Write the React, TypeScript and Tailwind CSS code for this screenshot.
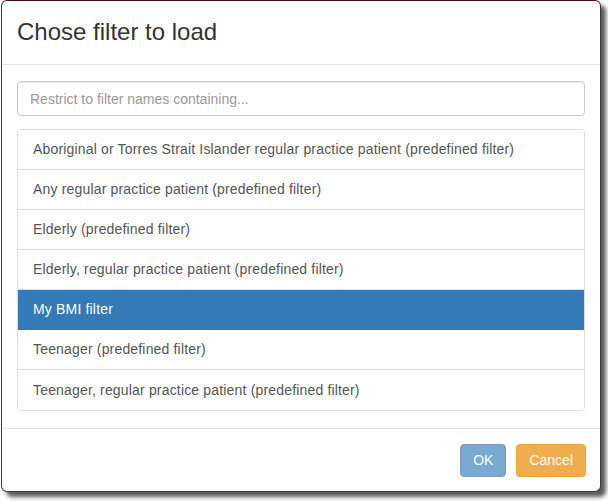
import React from 'react';

const filters = [
  'Aboriginal or Torres Strait Islander regular practice patient (predefined filter)',
  'Any regular practice patient (predefined filter)',
  'Elderly (predefined filter)',
  'Elderly, regular practice patient (predefined filter)',
  'My BMI filter',
  'Teenager (predefined filter)',
  'Teenager, regular practice patient (predefined filter)',
];

export default function App() {
  const selected = 'My BMI filter';

  return (
    <div className="w-[608px] h-[501px] bg-white pl-[1px] font-['Liberation_Sans',Arial,sans-serif]">
      <div className="w-[600px] h-[492px] flex flex-col bg-white rounded-[6px] border border-[#3a3a3a] border-t-[#4a1020] shadow-[5px_5px_4px_rgba(0,0,0,0.65)]">
        {/* header */}
        <div className="h-[64px] shrink-0 flex items-center px-[15px] border-b border-[#e5e5e5]">
          <h4 className="text-[24px] leading-none text-[#333] pb-[1px]">Chose filter to load</h4>
        </div>

        {/* body */}
        <div className="flex-1 px-[15px] pt-[16px]">
          <input
            type="text"
            placeholder="Restrict to filter names containing..."
            className="w-full h-[35px] px-[12px] text-[14px] text-[#555] placeholder:text-[#999] border border-[#ccc] rounded-[4px] shadow-[inset_0_1px_1px_rgba(0,0,0,0.075)] outline-none"
          />

          <div className="mt-[13px] border border-[#ddd] rounded-[4px] overflow-hidden">
            {filters.map((name, i) => {
              const active = name === selected;
              return (
                <div
                  key={name}
                  className={`h-[40px] flex items-center px-[15px] text-[14px] tracking-[0.17px] ${
                    i < filters.length - 1 ? 'border-b' : ''
                  } ${
                    active
                      ? 'bg-[#337ab7] text-white border-[#337ab7]'
                      : 'bg-white text-[#555] border-[#ddd]'
                  }`}
                >
                  {name}
                </div>
              );
            })}
          </div>
        </div>

        {/* footer */}
        <div className="h-[63px] shrink-0 flex items-center justify-end gap-[10px] px-[14px] border-t border-[#e5e5e5]">
          <button className="h-[33px] px-[12px] text-[14px] text-white bg-[#337ab7] border border-[#2e6da4] rounded-[4px] opacity-65">
            OK
          </button>
          <button className="h-[33px] px-[12px] text-[14px] text-white bg-[#f0ad4e] border border-[#eea236] rounded-[4px]">
            Cancel
          </button>
        </div>
      </div>
    </div>
  );
}
